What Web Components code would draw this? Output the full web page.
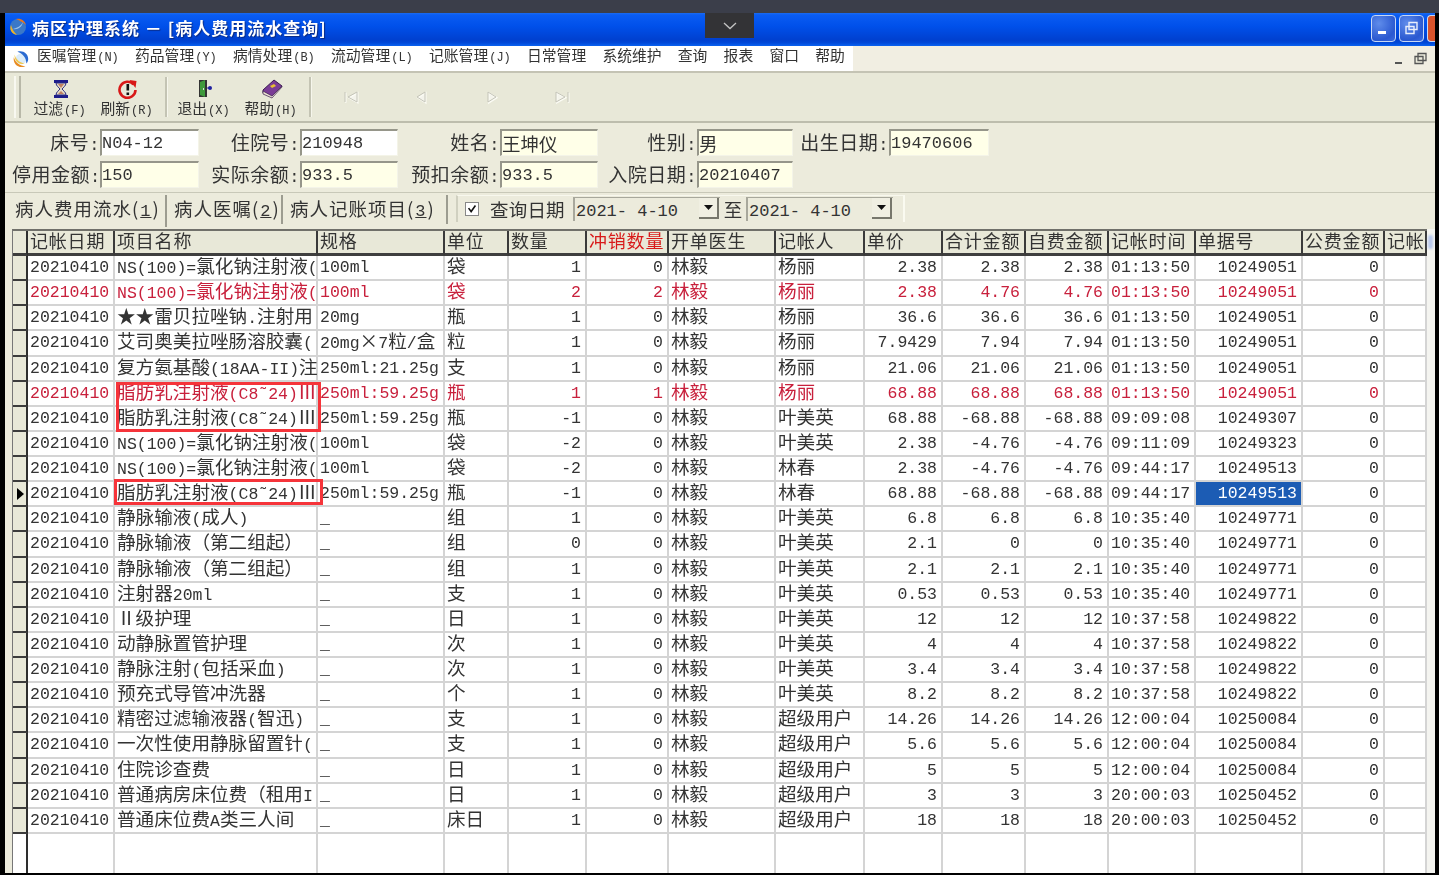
<!DOCTYPE html>
<html lang="zh">
<head>
<meta charset="utf-8">
<title>病人费用流水查询</title>
<style>
	html, body { margin: 0; height: 100%; background: #000; overflow: hidden; }
	body { display: flex; flex-direction: column; height: 875px; font-family: "Liberation Mono", "Noto Sans CJK SC", monospace; color: #2b2b2b; }
	#screen-top { height: 13px; flex: none; background: #3b3e4a; }
	#win { flex: none; height: 860px; margin-left: 5px; width: 1430px; background: #ecebdc; display: flex; flex-direction: column; }
</style>
</head>
<body>
<div id="screen-top"></div>
<div id="win">
	<app-titlebar>病区护理系统 － [病人费用流水查询]</app-titlebar>
	<app-menubar></app-menubar>
	<app-toolbar>
		<tool-button label="过滤" key="(F)" style="--w:67px">
			<svg viewBox="0 0 20 20" width="20" height="20"><path d="M3 1h14v3H3zM3 16h14v3H3z" fill="#1c1c8c"/><path d="M5 4h10c0 3-3 4.500-4 6 1 1.500 4 3 4 6H5c0-3 3-4.500 4-6-1-1.500-4-3-4-6z" fill="#e4dcc8" stroke="#2a2a80"/><path d="M7 5h6l-3 4zM7 15l3-3 3 3z" fill="#c08060"/></svg>
		</tool-button>
		<tool-button label="刷新" key="(R)" style="--w:67px">
			<svg viewBox="0 0 20 20" width="21" height="20"><path d="M16 5.500A8 8 0 1 0 18 11" fill="none" stroke="#d81818" stroke-width="2.600"/><path d="M12 1l7 1-1 7z" fill="#d81818"/><path d="M9 5h2.600v6.500H9zM9 13.500h2.600V16H9z" fill="#111"/></svg>
		</tool-button>
		<tool-sep></tool-sep>
		<tool-button label="退出" key="(X)" style="--w:67px">
			<svg viewBox="0 0 20 20" width="20" height="20"><path d="M4 1h8v17H4z" fill="#333"/><path d="M5 3l5-2v17l-5-2z" fill="#3f9a3c"/><path d="M8 9h1v2H8z" fill="#ddd"/><circle cx="15" cy="9" r="2" fill="#2020a0"/><path d="M12 8.500h2v1h-2z" fill="#2020a0"/></svg>
		</tool-button>
		<tool-button label="帮助" key="(H)" style="--w:67px">
			<svg viewBox="0 0 22 20" width="22" height="20"><path d="M2 11L13 1l8 6-10 11-9-4z" fill="#7a3c96" stroke="#3a1a50"/><path d="M2 12v3l9 4 10-11V7L11 17z" fill="#e8e0d0" stroke="#3a1a50" stroke-width=".7"/><path d="M9 7l4-2 2 2-4 2z" fill="#e8c030"/></svg>
		</tool-button>
		<tool-sep></tool-sep>
		<nav-arrow kind="first"></nav-arrow>
		<nav-arrow kind="prev"></nav-arrow>
		<nav-arrow kind="next"></nav-arrow>
		<nav-arrow kind="last"></nav-arrow>
	</app-toolbar>
	<patient-form></patient-form>
	<tab-strip></tab-strip>
	<fee-grid>
		<red-mark style="left:111px;top:153px;width:199px;height:44px"></red-mark>
		<red-mark style="left:109px;top:250px;width:203px;height:20px"></red-mark>
		<corner-tip></corner-tip>
	</fee-grid>
</div>
<screen-pulldown></screen-pulldown>

<script>
const CJK_SIZE = '18.600px';

// latin text is mono, chinese runs get wrapped so they can be a bit larger
function mixed(text) {
	return String(text).replace(/[^\x00-\x7f\u02dc]+/g, m => `<span class="c">${m}</span>`);
}

class AppTitlebar extends HTMLElement {
	constructor() {
		super();
		this.attachShadow({mode: 'open'}).innerHTML = `
			<style>
				:host { display: flex; align-items: center; height: 33px; flex: none; padding: 0 0 0 3px; box-sizing: border-box;
					background: linear-gradient(#1b6cf0 0, #0a5cf2 6%, #0050ea 40%, #0040cf 82%, #0048d8 90%, #0a62f0 100%);
					color: #fff; font: bold 17px/1 "Noto Sans CJK SC", sans-serif; text-shadow: 1px 1px 1px #0a2a80; }
				.text { margin: 0 0 5px 4px; white-space: pre; filter: blur(.4px); letter-spacing: 1px; }
				.sp { flex: 1; }
				.btn { width: 25px; height: 27px; margin-top: -3px; border: 1px solid #c8d8f4; border-radius: 4px; margin-right: 3px; box-sizing: border-box;
					background: radial-gradient(circle at 30% 30%, #5f8cea, #2a58d0 70%, #3a6ae0); display: flex; align-items: center; justify-content: center; }
				.close { width: 8px; border-radius: 4px 0 0 4px; border-right: 0; margin-right: 0; background: #d8532c; }
				svg.logo { margin-bottom: 5px; }
			</style>
			<svg class="logo" viewBox="0 0 20 20" width="20" height="20">
				<circle cx="10" cy="10" r="8" fill="#3a78c8"/>
				<path d="M8 2c5-1 9 2 10 6-3-3-6-4-10-6z" fill="#e8761c"/>
				<path d="M3 8c-2 5 1 9 6 10-3-3-5-6-6-10z" fill="#eeb428"/>
				<path d="M5 12c4-1 8-3 10-7-1 5-5 8-10 7z" fill="#9cc4ec"/>
			</svg>
			<span class="text"><slot></slot></span>
			<span class="sp"></span>
			<span class="btn"><svg width="13" height="13" viewBox="0 0 13 13"><path d="M1 9h8v3H1z" fill="#fff"/></svg></span>
			<span class="btn"><svg width="15" height="15" viewBox="0 0 15 15"><path d="M5 1.500h8v7H5zM2 5.500h8v7H2z" fill="none" stroke="#e8eefc" stroke-width="1.400"/></svg></span>
			<span class="btn close"></span>
		`;
	}
}

class AppMenubar extends HTMLElement {
	constructor() {
		super();
		const items = [['医嘱管理', '(N)'], ['药品管理', '(Y)'], ['病情处理', '(B)'], ['流动管理', '(L)'], ['记账管理', '(J)'],
			['日常管理'], ['系统维护'], ['查询'], ['报表'], ['窗口'], ['帮助']];
		const html = items.map(i => `<span class="item">${i[0]}${i[1] ? `<small>${i[1]}</small>` : ''}</span>`).join('');
		this.attachShadow({mode: 'open'}).innerHTML = `
			<style>
				:host { display: flex; height: 25px; flex: none; background: #f1eee2; font: 14.800px/1 "Noto Sans CJK SC", sans-serif; color: #333; border-bottom: 2px solid #c4c3b4; }
				.left { display: flex; align-items: center; background: #fff; width: 848px; flex: none; padding-left: 7px; box-sizing: border-box; filter: blur(.4px); }
				.items { display: flex; gap: 16.200px; margin: 0 0 5px 7px; }
				.item { white-space: nowrap; }
				small { font: 12px/1 "Liberation Mono", monospace; margin-left: 1px; }
				.sp { flex: 1; }
				.mdi { display: flex; align-items: center; gap: 6px; padding-right: 6px; }
			</style>
			<div class="left">
				<svg viewBox="0 0 20 20" width="18" height="20">
					<circle cx="10" cy="10" r="6" fill="#dcecf8"/>
					<path d="M6 2c6-2 12 2 12 8 0 2-1 4-2 5 0-6-4-11-10-13z" fill="#2a6ad0"/>
					<path d="M2 8c-1 6 3 11 9 11 2 0 3-1 4-1-6 0-11-4-13-10z" fill="#e88a20"/>
					<path d="M3 5c1 5 5 9 11 10-6 2-12-3-11-10z" fill="#f0c84a"/>
				</svg>
				<div class="items">${html}</div>
			</div>
			<span class="sp"></span>
			<div class="mdi">
				<svg width="16" height="20" viewBox="0 0 16 20"><path d="M4 13h7v2H4z" fill="#555"/></svg>
				<svg width="16" height="20" viewBox="0 0 16 20"><path d="M5 4.500h8v7H5zM2 7.500h8v7H2z" fill="#ecebdc" stroke="#555" stroke-width="1.300"/></svg>
			</div>
		`;
	}
}

class AppToolbar extends HTMLElement {
	constructor() {
		super();
		this.attachShadow({mode: 'open'}).innerHTML = `
			<style>
				:host { display: flex; align-items: center; height: 50px; flex: none; box-sizing: border-box; background: #e8e8d8; border-bottom: 2px solid #bdbdad; padding-left: 9px; }
				.grip { width: 7px; height: 42px; border-left: 2px solid #f8f8f0; border-right: 2px solid #b8b8a8; margin-right: 6px; box-sizing: border-box; }
				.row { display: flex; align-items: center; filter: blur(.4px); }
			</style>
			<span class="grip"></span>
			<div class="row"><slot></slot></div>
		`;
	}
}

class ToolButton extends HTMLElement {
	constructor() {
		super();
		this.attachShadow({mode: 'open'}).innerHTML = `
			<style>
				:host { display: flex; flex-direction: column; align-items: center; width: var(--w); height: 44px; padding-top: 4px; box-sizing: border-box; font: 14.800px/1 "Noto Sans CJK SC", sans-serif; color: #333; }
				.i { height: 20px; display: flex; align-items: flex-end; }
				.l { margin-top: 2px; white-space: nowrap; margin-left: -2px; }
				small { font: 12px/1 "Liberation Mono", monospace; margin-left: 1px; }
			</style>
			<span class="i"><slot></slot></span>
			<span class="l">${this.getAttribute('label')}<small>${this.getAttribute('key')}</small></span>
		`;
	}
}

class ToolSep extends HTMLElement {
	constructor() {
		super();
		this.attachShadow({mode: 'open'}).innerHTML = `
			<style>:host { display: block; width: 2px; height: 40px; background: #c4c4b4; border-right: 1px solid #f6f6ec; margin: 0 3px 0 4px; }</style>
		`;
	}
}

class NavArrow extends HTMLElement {
	constructor() {
		super();
		const paths = {
			first: 'M3 4v10M15 4L6 9l9 5z',
			prev: 'M13 4L5 9l8 5z',
			next: 'M5 4l8 5-8 5z',
			last: 'M15 4v10M3 4l9 5-9 5z',
		};
		const d = paths[this.getAttribute('kind')];
		this.attachShadow({mode: 'open'}).innerHTML = `
			<style>:host { display: flex; justify-content: center; width: 70.500px; } svg { margin-left: 1px; }</style>
			<svg width="18" height="18" viewBox="0 0 18 18">
				<path d="${d}" fill="#f4f4ec" stroke="#fbfbf4" stroke-width="1.500" transform="translate(.8 .8)"/>
				<path d="${d}" fill="none" stroke="#c4c4b8" stroke-width="1"/>
			</svg>
		`;
	}
}

class FormField extends HTMLElement {
	constructor() {
		super();
		const bg = this.getAttribute('bg') || '#ffffe8';
		this.attachShadow({mode: 'open'}).innerHTML = `
			<style>
				:host { display: flex; align-items: center; flex: none; height: 100%; font-size: 17px; }
				.l { width: var(--lw); text-align: right; font: 19px/1 "Noto Sans CJK SC", sans-serif; white-space: nowrap; box-sizing: border-box; letter-spacing: .5px; }
				.l i { font: 17px/1 "Liberation Mono", monospace; }
				.v { width: var(--iw); height: 100%; box-sizing: border-box; background: ${bg}; border-top: 2px solid #96968a; border-left: 2px solid #96968a; border-right: 1px solid #f4f4e8; border-bottom: 1px solid #f4f4e8;
					padding: 3px 0 0 0; white-space: nowrap; line-height: 19px; }
				.c { font: 18.500px/1 "Noto Sans CJK SC", sans-serif; }
			</style>
			<span class="l">${this.getAttribute('label')}<i>:</i></span>
			<span class="v">${mixed(this.getAttribute('value'))}</span>
		`;
	}
}

class PatientForm extends HTMLElement {
	constructor() {
		super();
		const f = (label, value, lw, iw, bg) =>
			`<form-field label="${label}" value="${value}" style="--lw:${lw}px;--iw:${iw}px" ${bg ? `bg="${bg}"` : ''}></form-field>`;
		this.attachShadow({mode: 'open'}).innerHTML = `
			<style>
				:host { display: flex; flex-direction: column; flex: none; height: 69px; box-sizing: border-box; padding: 6px 0 3px 7px; gap: 5px; background: #ecebdc; color: #333; }
				.r { display: flex; height: 27px; filter: blur(.4px); }
			</style>
			<div class="r">
				${f('床号', 'N04-12', 88, 99, '#fff')}
				${f('住院号', '210948', 101, 98, '#fff')}
				${f('姓名', '王坤仪', 102, 98)}
				${f('性别', '男', 99, 96)}
				${f('出生日期', '19470606', 96, 100)}
			</div>
			<div class="r">
				${f('停用金额', '150', 88, 99)}
				${f('实际余额', '933.5', 101, 98)}
				${f('预扣余额', '933.5', 102, 98)}
				${f('入院日期', '20210407', 99, 96)}
			</div>
		`;
	}
}

class DateCombo extends HTMLElement {
	constructor() {
		super();
		this.attachShadow({mode: 'open'}).innerHTML = `
			<style>
				:host { display: flex; align-items: center; width: 147px; height: 24px; box-sizing: border-box; background: #ecebdc; border-top: 1px solid #a8a89c; border-left: 2px solid #a8a89c; font: 17px/1 "Liberation Mono", monospace; padding: 3px 0 0 1px; white-space: pre; position: relative; }
				.b { position: absolute; right: 1px; top: 0; width: 20px; height: 21px; background: #f0efe2; border-right: 2px solid #77776c; border-bottom: 2px solid #77776c; box-sizing: border-box; display: flex; align-items: center; justify-content: center; }
			</style>
			<span>${this.getAttribute('value')}</span>
			<span class="b"><svg width="9" height="5"><path d="M0 0h9L4.500 5z" fill="#111"/></svg></span>
		`;
	}
}

class TabStrip extends HTMLElement {
	constructor() {
		super();
		const tab = (zh, n, w, on) => `<span class="t ${on ? 'on' : ''}" style="width:${w}px">${zh}(<u>${n}</u>)</span>`;
		this.attachShadow({mode: 'open'}).innerHTML = `
			<style>
				:host { display: flex; flex: none; height: 37px; box-sizing: border-box; padding: 2px 0 0 8px; background: #ecebdc; font: 18.500px/1 "Noto Sans CJK SC", sans-serif; color: #333; border-top: 1px solid #c8c8b8; }
				.tabs { display: flex; filter: blur(.4px); height: 30px; align-items: flex-start; }
				.t { box-sizing: border-box; height: 29px; padding: 4px 0 0 2px; white-space: nowrap; border-right: 2px solid #9c9c90; margin-right: 5px; letter-spacing: 1px; }
				.t.on { height: 32px; }
				.t u { font: 17px/1 "Liberation Mono", monospace; text-decoration: underline; margin: 0 1px; }
				.panel { display: flex; align-items: center; margin: 0 0 0 3px; width: 449px; height: 27px; box-sizing: border-box; padding-left: 7px; border-left: 2px solid #d0d0c0; border-right: 2px solid #fafaf0; border-top: 1px solid #f8f8ee; filter: blur(.4px); }
				.cb { width: 14px; height: 14px; box-sizing: border-box; background: #fff; border: 1px solid #888; margin-right: 11px; flex: none; }
				.lab { width: 83px; letter-spacing: .2px; }
				.to { width: 26px; text-align: center; }
			</style>
			<div class="tabs">
				${tab('病人费用流水', 1, 154, true)}
				${tab('病人医嘱', 2, 111)}
				${tab('病人记账项目', 3, 160)}
			</div>
			<div class="panel">
				<svg class="cb" viewBox="0 0 14 14"><path d="M3 6l3 4 5-7" fill="none" stroke="#111" stroke-width="1.800"/></svg>
				<span class="lab">查询日期</span>
				<date-combo value="2021- 4-10"></date-combo>
				<span class="to">至</span>
				<date-combo value="2021- 4-10"></date-combo>
			</div>
		`;
	}
}

const COLUMNS = [
	[87, '记帐日期', 'l'], [203, '项目名称', 'l'], [127, '规格', 'l'], [64, '单位', 'l'], [78, '数量', 'r'], [82, '冲销数量', 'r'],
	[107, '开单医生', 'l'], [89, '记帐人', 'l'], [78, '单价', 'r'], [83, '合计金额', 'r'], [83, '自费金额', 'r'], [87, '记帐时间', 'l'],
	[107, '单据号', 'r'], [82, '公费金额', 'r'], [42, '记帐', 'l'],
];

const NS = 'NS(100)=氯化钠注射液(', FAT = '脂肪乳注射液(C8\u02dc24)Ⅲ', FATSPEC = '250ml:59.25g';
// name, spec, unit, qty, cancelled, doctor, clerk, price, total, own, time, receipt, flag
const ROWS = [
	[NS, '100ml', '袋', 1, 0, '林毅', '杨丽', '2.38', '2.38', '2.38', '01:13:50', 10249051],
	[NS, '100ml', '袋', 2, 2, '林毅', '杨丽', '2.38', '4.76', '4.76', '01:13:50', 10249051, 'red'],
	['★★雷贝拉唑钠.注射用', '20mg', '瓶', 1, 0, '林毅', '杨丽', '36.6', '36.6', '36.6', '01:13:50', 10249051],
	['艾司奥美拉唑肠溶胶囊(', '20mg×7粒/盒', '粒', 1, 0, '林毅', '杨丽', '7.9429', '7.94', '7.94', '01:13:50', 10249051],
	['复方氨基酸(18AA-II)注', '250ml:21.25g', '支', 1, 0, '林毅', '杨丽', '21.06', '21.06', '21.06', '01:13:50', 10249051],
	[FAT, FATSPEC, '瓶', 1, 1, '林毅', '杨丽', '68.88', '68.88', '68.88', '01:13:50', 10249051, 'red'],
	[FAT, FATSPEC, '瓶', -1, 0, '林毅', '叶美英', '68.88', '-68.88', '-68.88', '09:09:08', 10249307],
	[NS, '100ml', '袋', -2, 0, '林毅', '叶美英', '2.38', '-4.76', '-4.76', '09:11:09', 10249323],
	[NS, '100ml', '袋', -2, 0, '林毅', '林春', '2.38', '-4.76', '-4.76', '09:44:17', 10249513],
	[FAT, FATSPEC, '瓶', -1, 0, '林毅', '林春', '68.88', '-68.88', '-68.88', '09:44:17', 10249513, 'current'],
	['静脉输液(成人)', '_', '组', 1, 0, '林毅', '叶美英', '6.8', '6.8', '6.8', '10:35:40', 10249771],
	['静脉输液（第二组起）', '_', '组', 0, 0, '林毅', '叶美英', '2.1', '0', '0', '10:35:40', 10249771],
	['静脉输液（第二组起）', '_', '组', 1, 0, '林毅', '叶美英', '2.1', '2.1', '2.1', '10:35:40', 10249771],
	['注射器20ml', '_', '支', 1, 0, '林毅', '叶美英', '0.53', '0.53', '0.53', '10:35:40', 10249771],
	['Ⅱ级护理', '_', '日', 1, 0, '林毅', '叶美英', '12', '12', '12', '10:37:58', 10249822],
	['动静脉置管护理', '_', '次', 1, 0, '林毅', '叶美英', '4', '4', '4', '10:37:58', 10249822],
	['静脉注射(包括采血)', '_', '次', 1, 0, '林毅', '叶美英', '3.4', '3.4', '3.4', '10:37:58', 10249822],
	['预充式导管冲洗器', '_', '个', 1, 0, '林毅', '叶美英', '8.2', '8.2', '8.2', '10:37:58', 10249822],
	['精密过滤输液器(智迅)', '_', '支', 1, 0, '林毅', '超级用户', '14.26', '14.26', '14.26', '12:00:04', 10250084],
	['一次性使用静脉留置针(', '_', '支', 1, 0, '林毅', '超级用户', '5.6', '5.6', '5.6', '12:00:04', 10250084],
	['住院诊查费', '_', '日', 1, 0, '林毅', '超级用户', '5', '5', '5', '12:00:04', 10250084],
	['普通病房床位费（租用I', '_', '日', 1, 0, '林毅', '超级用户', '3', '3', '3', '20:00:03', 10250452],
	['普通床位费A类三人间', '_', '床日', 1, 0, '林毅', '超级用户', '18', '18', '18', '20:00:03', 10250452],
];

class FeeGrid extends HTMLElement {
	constructor() {
		super();
		const tracks = COLUMNS.map(c => c[0] + 'px').join(' ');
		let cells = '<div class="hd ind"></div>';
		for (const [, name] of COLUMNS) {
			cells += `<div class="hd ${name === '冲销数量' ? 'hot' : ''}">${name}</div>`;
		}
		for (const row of ROWS) {
			const flag = row[12];
			const rowCls = flag === 'red' ? 'red' : '';
			cells += `<div class="ind">${flag === 'current' ? '<svg width="7" height="12"><path d="M0 0l7 6-7 6z" fill="#000"/></svg>' : ''}</div>`;
			const vals = ['20210410', ...row.slice(0, 12), '0', ''];
			vals.forEach((v, i) => {
				const align = COLUMNS[i][2];
				const sel = flag === 'current' && i === 12 ? 'sel' : '';
				cells += `<div class="td ${align} ${rowCls} ${sel}">${mixed(v)}</div>`;
			});
		}
		cells += '<div class="ind end"></div>' + COLUMNS.map(() => '<div class="td end"></div>').join('');
		this.attachShadow({mode: 'open'}).innerHTML = `
			<style>
				:host { display: block; flex: 1; min-height: 0; position: relative; padding-left: 7px; background: linear-gradient(90deg, #ecebdc 50%, #f4f4f0 50%); }
				.grid { display: grid; grid-template-columns: 15px ${tracks}; grid-template-rows: 25px repeat(23, 25.140px) 1fr; height: 100%; box-sizing: border-box; background: #fff; border-top: 2px solid #70706a; border-left: 1px solid #777; font-size: 16.500px; color: #333; filter: blur(.4px); width: 1415px; }
				.c { font: ${CJK_SIZE}/1 "Noto Sans CJK SC", sans-serif; }
				.hd { box-sizing: border-box; background: #e8e8d8; border-right: 2px solid #3a3a3a; border-bottom: 3px solid #3f3f3f; font: 18px/18px "Noto Sans CJK SC", sans-serif; padding-left: 2px; white-space: nowrap; letter-spacing: .8px; }
				.hot { color: #d81a1a; }
				.td { box-sizing: border-box; border-right: 2px solid #d4d4d4; border-bottom: 2px solid #d4d4d4; padding: 0 2px; line-height: 23px; white-space: nowrap; background: #fff; }
				.td.r { text-align: right; padding-right: 4px; }
				.red { color: #c8203c; }
				.sel { background: #1c5cb4; color: #fff; }
				.ind { box-sizing: border-box; background: #e8e8d8; border-right: 2px solid #2e2e2e; border-bottom: 2px solid #3c3c3c; display: flex; align-items: center; padding-left: 4px; }
				.ind.hd { border-bottom-width: 3px; }
				.ind.end { background: #fff; border-bottom: 0; }
				.td.end { border-bottom: 0; }
			</style>
			<div class="grid">${cells}</div>
			<slot></slot>
		`;
	}
}

class RedMark extends HTMLElement {
	constructor() {
		super();
		this.attachShadow({mode: 'open'}).innerHTML = `
			<style>:host { display: block; position: absolute; border: 3px solid #f6343a; pointer-events: none; }</style>
		`;
	}
}

// bit of the blurred scrollbar arrow that pokes out right of the header
class CornerTip extends HTMLElement {
	constructor() {
		super();
		this.attachShadow({mode: 'open'}).innerHTML = `
			<style>:host { display: block; position: absolute; right: 2px; top: 6px; width: 5px; height: 14px; border-radius: 2px; background: #b8c8ec; filter: blur(1px); }</style>
		`;
	}
}

class ScreenPulldown extends HTMLElement {
	constructor() {
		super();
		this.attachShadow({mode: 'open'}).innerHTML = `
			<style>:host { position: absolute; left: 705px; top: 13px; width: 49px; height: 25px; background: #333336; display: flex; align-items: center; justify-content: center; }</style>
			<svg width="14" height="8" viewBox="0 0 14 8"><path d="M1 1l6 5.500L13 1" fill="none" stroke="#c4c4c4" stroke-width="1.300"/></svg>
		`;
	}
}

for (const [tag, cls] of Object.entries({
	'app-titlebar': AppTitlebar, 'app-menubar': AppMenubar, 'app-toolbar': AppToolbar, 'tool-button': ToolButton,
	'tool-sep': ToolSep, 'nav-arrow': NavArrow, 'form-field': FormField, 'patient-form': PatientForm,
	'date-combo': DateCombo, 'tab-strip': TabStrip, 'fee-grid': FeeGrid, 'red-mark': RedMark, 'corner-tip': CornerTip,
	'screen-pulldown': ScreenPulldown,
})) {
	customElements.define(tag, cls);
}
</script>
</body>
</html>
